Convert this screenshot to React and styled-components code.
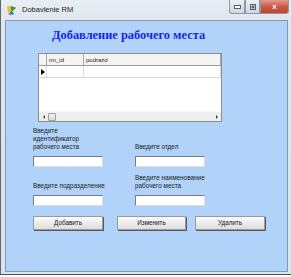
import React from 'react';
import styled, { createGlobalStyle } from 'styled-components';

const GlobalStyle = createGlobalStyle`
  html, body {
    margin: 0;
    padding: 0;
    background: #ffffff;
  }
`;

const Window = styled.div`
  width: 291px;
  height: 275px;
  box-sizing: border-box;
  display: flex;
  flex-direction: column;
  padding: 0 3px 2px 4px;
  background: linear-gradient(180deg, #e9eef4 0px, #dfe6ee 20px, #dbe3ec 100%);
  border-left: 1px solid #5f6873;
  border-bottom: 1px solid #4a525c;
  font-family: "Liberation Sans", Arial, sans-serif;
`;

const TitleBar = styled.div`
  height: 20px;
  display: flex;
  align-items: flex-start;
  flex-shrink: 0;
`;

const AppIcon = styled.svg`
  width: 11px;
  height: 11px;
  margin: 5px 5px 0 1px;
`;

const Caption = styled.span`
  font-size: 7.5px;
  line-height: 10px;
  margin-top: 5px;
  color: #1e1e1e;
  flex: 1;
`;

const Controls = styled.div`
  display: flex;
  margin-right: -1px;
`;

const CtlBtn = styled.div`
  width: ${(p) => p.$w}px;
  height: 14px;
  box-sizing: border-box;
  display: flex;
  align-items: center;
  justify-content: center;
  border: 1px solid #8c98a6;
  border-top: none;
  background: ${(p) =>
    p.$close
      ? 'linear-gradient(180deg, #e19a8f 0%, #cc5a48 50%, #c2442f 100%)'
      : 'linear-gradient(180deg, #eef2f6 0%, #dbe2ea 50%, #cfd8e2 100%)'};
  border-radius: ${(p) => p.$radius};
  color: #ffffff;
  font-size: 8px;
  font-weight: bold;
`;

const Client = styled.div`
  flex: 1;
  border: 1px solid #8a98a8;
  background: #b1d3fa;
  padding: 0 0 0 27px;
  display: flex;
  flex-direction: column;
  align-items: flex-start;
`;

const Heading = styled.div`
  margin: 6px 0 0 19px;
  font-family: "Liberation Serif", "Times New Roman", serif;
  font-weight: bold;
  font-size: 12.4px;
  line-height: 16px;
  color: #1a1ef0;
`;

const Table = styled.div`
  margin: 10px 0 0 5px;
  width: 184px;
  height: 69px;
  box-sizing: border-box;
  border: 1px solid #8e8e8e;
  background: #ffffff;
  display: flex;
  flex-direction: column;
`;

const Row = styled.div`
  display: grid;
  grid-template-columns: 8px 37px 1fr;
  height: ${(p) => p.$h}px;
  background: ${(p) => (p.$head ? '#f4f4f4' : '#ffffff')};
  border-bottom: 1px solid ${(p) => (p.$head ? '#9a9a9a' : '#d8d8d8')};
`;

const Cell = styled.div`
  border-right: 1px solid ${(p) => (p.$head ? '#a8a8a8' : '#dcdcdc')};
  font-size: 6px;
  line-height: 10px;
  padding-left: 2px;
  color: #222;
  display: flex;
  align-items: center;
`;

const Marker = styled.div`
  width: 0;
  height: 0;
  border-top: 3px solid transparent;
  border-bottom: 3px solid transparent;
  border-left: 4px solid #000;
`;

const Empty = styled.div`
  flex: 1;
`;

const HScroll = styled.div`
  height: 9px;
  display: flex;
  align-items: center;
  background: #eeeeee;
  border-top: 1px solid #f8f8f8;
`;

const Arrow = styled.div`
  width: 9px;
  height: 9px;
  display: flex;
  align-items: center;
  justify-content: center;
  &::after {
    content: '';
    border-top: 2px solid transparent;
    border-bottom: 2px solid transparent;
    ${(p) => (p.$dir === 'left' ? 'border-right: 2px solid #444;' : 'border-left: 2px solid #444;')}
  }
`;

const Thumb = styled.div`
  width: 8px;
  height: 8px;
  box-sizing: border-box;
  border: 1px solid #a0a0a0;
  border-radius: 1px;
  background: linear-gradient(180deg, #f4f4f4, #dadada);
`;

const Track = styled.div`
  flex: 1;
`;

const Form = styled.div`
  margin-top: 5px;
  display: grid;
  grid-template-columns: 102px 70px;
  row-gap: 7px;
  align-items: end;
`;

const Field = styled.div`
  display: flex;
  flex-direction: column;
`;

const Label = styled.div`
  font-size: 6.4px;
  line-height: 8px;
  color: #1b1b1b;
  width: ${(p) => p.$w || 70}px;
  margin-bottom: ${(p) => p.$mb || 5}px;
`;

const Input = styled.div`
  width: 70px;
  height: 11px;
  box-sizing: border-box;
  background: #ffffff;
  border-top: 1px solid #7b7b7b;
  border-left: 1px solid #7b7b7b;
  border-right: 1px solid #dcdcdc;
  border-bottom: 1px solid #dcdcdc;
`;

const Buttons = styled.div`
  margin-top: 10px;
  display: flex;
`;

const Button = styled.div`
  width: ${(p) => p.$w}px;
  height: 14px;
  margin-left: ${(p) => p.$ml || 0}px;
  box-sizing: border-box;
  border: 1px solid #9a9a9a;
  box-shadow: 1px 1px 0 #5a5a5a;
  background: linear-gradient(180deg, #fbfbfb 0%, #ececec 50%, #dedede 100%);
  font-size: 6.3px;
  line-height: 12px;
  text-align: center;
  color: #111;
`;

function App() {
  return (
    <>
      <GlobalStyle />
      <Window>
        <TitleBar>
          <AppIcon viewBox="0 0 12 12">
            <path d="M1 2 L5 1 L6 6 L3 11 Z" fill="#e8c21a" />
            <path d="M5 1 L11 3 L7 7 L6 6 Z" fill="#3a9a2a" />
            <path d="M3 11 L6 6 L9 10 Z" fill="#2f6fc0" />
          </AppIcon>
          <Caption>Dobavlenie RM</Caption>
          <Controls>
            <CtlBtn $w={16} $radius="0 0 0 3px">
              <svg width="7" height="4" viewBox="0 0 7 4">
                <rect x="0.5" y="0.5" width="6" height="3" fill="#fff" stroke="#55606c" strokeWidth="1" />
              </svg>
            </CtlBtn>
            <CtlBtn $w={15} $radius="0">
              <svg width="6" height="6" viewBox="0 0 6 6">
                <rect x="0.5" y="0.5" width="5" height="5" fill="#fff" stroke="#55606c" strokeWidth="1" />
                <rect x="1.5" y="1.5" width="3" height="3" fill="#55606c" />
              </svg>
            </CtlBtn>
            <CtlBtn $w={29} $close $radius="0 0 3px 0">x</CtlBtn>
          </Controls>
        </TitleBar>
        <Client>
          <Heading>Добавление рабочего места</Heading>
          <Table>
            <Row $head $h={11}>
              <Cell $head />
              <Cell $head>rm_id</Cell>
              <Cell $head>podrazd</Cell>
            </Row>
            <Row $h={11}>
              <Cell>
                <Marker />
              </Cell>
              <Cell />
              <Cell />
            </Row>
            <Empty />
            <HScroll>
              <Arrow $dir="left" />
              <Thumb />
              <Track />
              <Arrow $dir="right" />
            </HScroll>
          </Table>
          <Form>
            <Field>
              <Label>Введите идентификатор рабочего места</Label>
              <Input />
            </Field>
            <Field>
              <Label>Введите отдел</Label>
              <Input />
            </Field>
            <Field>
              <Label $w={80}>Введите подразделение</Label>
              <Input />
            </Field>
            <Field>
              <Label $w={90}>Введите наименование рабочего места</Label>
              <Input />
            </Field>
          </Form>
          <Buttons>
            <Button $w={70}>Добавить</Button>
            <Button $w={69} $ml={14}>Изменить</Button>
            <Button $w={70} $ml={9}>Удалить</Button>
          </Buttons>
        </Client>
      </Window>
    </>
  );
}

export default App;
